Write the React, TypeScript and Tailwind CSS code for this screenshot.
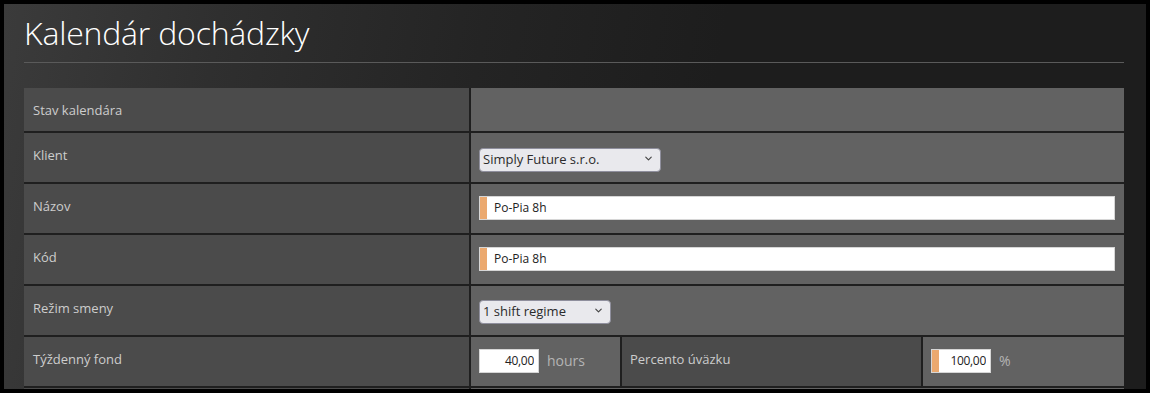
import { ChevronDown } from "lucide-react"

const font = { fontFamily: '"Open Sans", "Noto Sans", sans-serif' }

function Label({ text, first }: { text: string; first?: boolean }) {
  return (
    <div className={`bg-[#4b4b4b] px-[9px] pt-[13px] ${first ? "pb-[12px]" : "pb-[18px]"} text-[13px] leading-[18px] text-[#cdcdcd]`}>
      {text}
    </div>
  )
}

function Select({ value, width }: { value: string; width: string }) {
  return (
    <div className={`relative ${width}`}>
      <select
        defaultValue={value}
        className="h-[24px] w-full appearance-none rounded-[4px] border border-[#8f8f9d] bg-[#e9e9ed] pl-[3px] text-[13px] text-[#2b2b2b] outline-none"
        style={font}
      >
        <option>{value}</option>
      </select>
      <ChevronDown className="pointer-events-none absolute right-[7px] top-[7px] h-[11px] w-[11px] text-[#444]" strokeWidth={2.5} />
    </div>
  )
}

function TextInput({ value, required, className }: { value: string; required?: boolean; className: string }) {
  return (
    <div className={`flex h-[24px] border border-[#d6d6d6] bg-white ${className}`}>
      {required && <div className="w-[7px] shrink-0 bg-[#eba96f]" />}
      <input
        defaultValue={value}
        className="min-w-0 flex-1 bg-transparent px-[7px] text-[12px] text-[#222] outline-none"
        style={font}
      />
    </div>
  )
}

function NumInput({ value, required }: { value: string; required?: boolean }) {
  return (
    <div className="flex h-[24px] w-[60px] border border-[#d6d6d6] bg-white">
      {required && <div className="w-[7px] shrink-0 bg-[#eba96f]" />}
      <input
        defaultValue={value}
        className="min-w-0 flex-1 bg-transparent pr-[4px] text-right text-[12px] tracking-[-0.3px] text-[#222] outline-none"
        style={font}
      />
    </div>
  )
}

export default function App() {
  return (
    <div className="h-[393px] w-[1150px] overflow-hidden bg-black p-[4px]" style={font}>
      <div className="h-[385px] overflow-hidden bg-[linear-gradient(100deg,#3b3b3b_0%,#2f2f2f_18%,#242424_40%,#1d1d1d_60%)] pl-[20px] pr-[22px] pt-[9px]">
        <h1 className="text-[32px] font-light leading-[40px] tracking-[-0.2px] text-white">Kalendár dochádzky</h1>
        <div className="mt-[9px] h-px bg-[#5a5a5a]" />

        <div className="mt-[25px] grid grid-cols-[445px_1fr] gap-[2px] bg-[#1f1f1f]">
          <Label text="Stav kalendára" first />
          <div className="bg-[#626262]" />

          <Label text="Klient" />
          <div className="bg-[#626262] px-[8px] pt-[13px]">
            <Select value="Simply Future s.r.o." width="w-[182px]" />
          </div>

          <Label text="Názov" />
          <div className="bg-[#626262] pl-[8px] pr-[9px] pt-[12px]">
            <TextInput value="Po-Pia 8h" required className="w-full" />
          </div>

          <Label text="Kód" />
          <div className="bg-[#626262] pl-[8px] pr-[9px] pt-[12px]">
            <TextInput value="Po-Pia 8h" required className="w-full" />
          </div>

          <Label text="Režim smeny" />
          <div className="bg-[#626262] px-[8px] pt-[12px]">
            <Select value="1 shift regime" width="w-[132px]" />
          </div>

          <Label text="Týždenný fond" />
          <div className="grid grid-cols-[149px_299px_1fr] gap-[2px] bg-[#1f1f1f]">
            <div className="flex items-start gap-[8px] bg-[#626262] px-[8px] pt-[12px]">
              <NumInput value="40,00" />
              <span className="text-[14px] leading-[24px] text-[#b4b4b4]">hours</span>
            </div>
            <div className="bg-[#4b4b4b] px-[8px] pt-[13px] text-[13px] leading-[18px] text-[#cdcdcd]">Percento úväzku</div>
            <div className="flex items-start gap-[8px] bg-[#626262] px-[8px] pt-[12px]">
              <NumInput value="100,00" required />
              <span className="text-[14px] leading-[24px] text-[#b4b4b4]">%</span>
            </div>
          </div>

          <div className="h-[20px] bg-[#4b4b4b]" />
          <div className="h-[20px] bg-[#626262]" />
        </div>
      </div>
    </div>
  )
}
